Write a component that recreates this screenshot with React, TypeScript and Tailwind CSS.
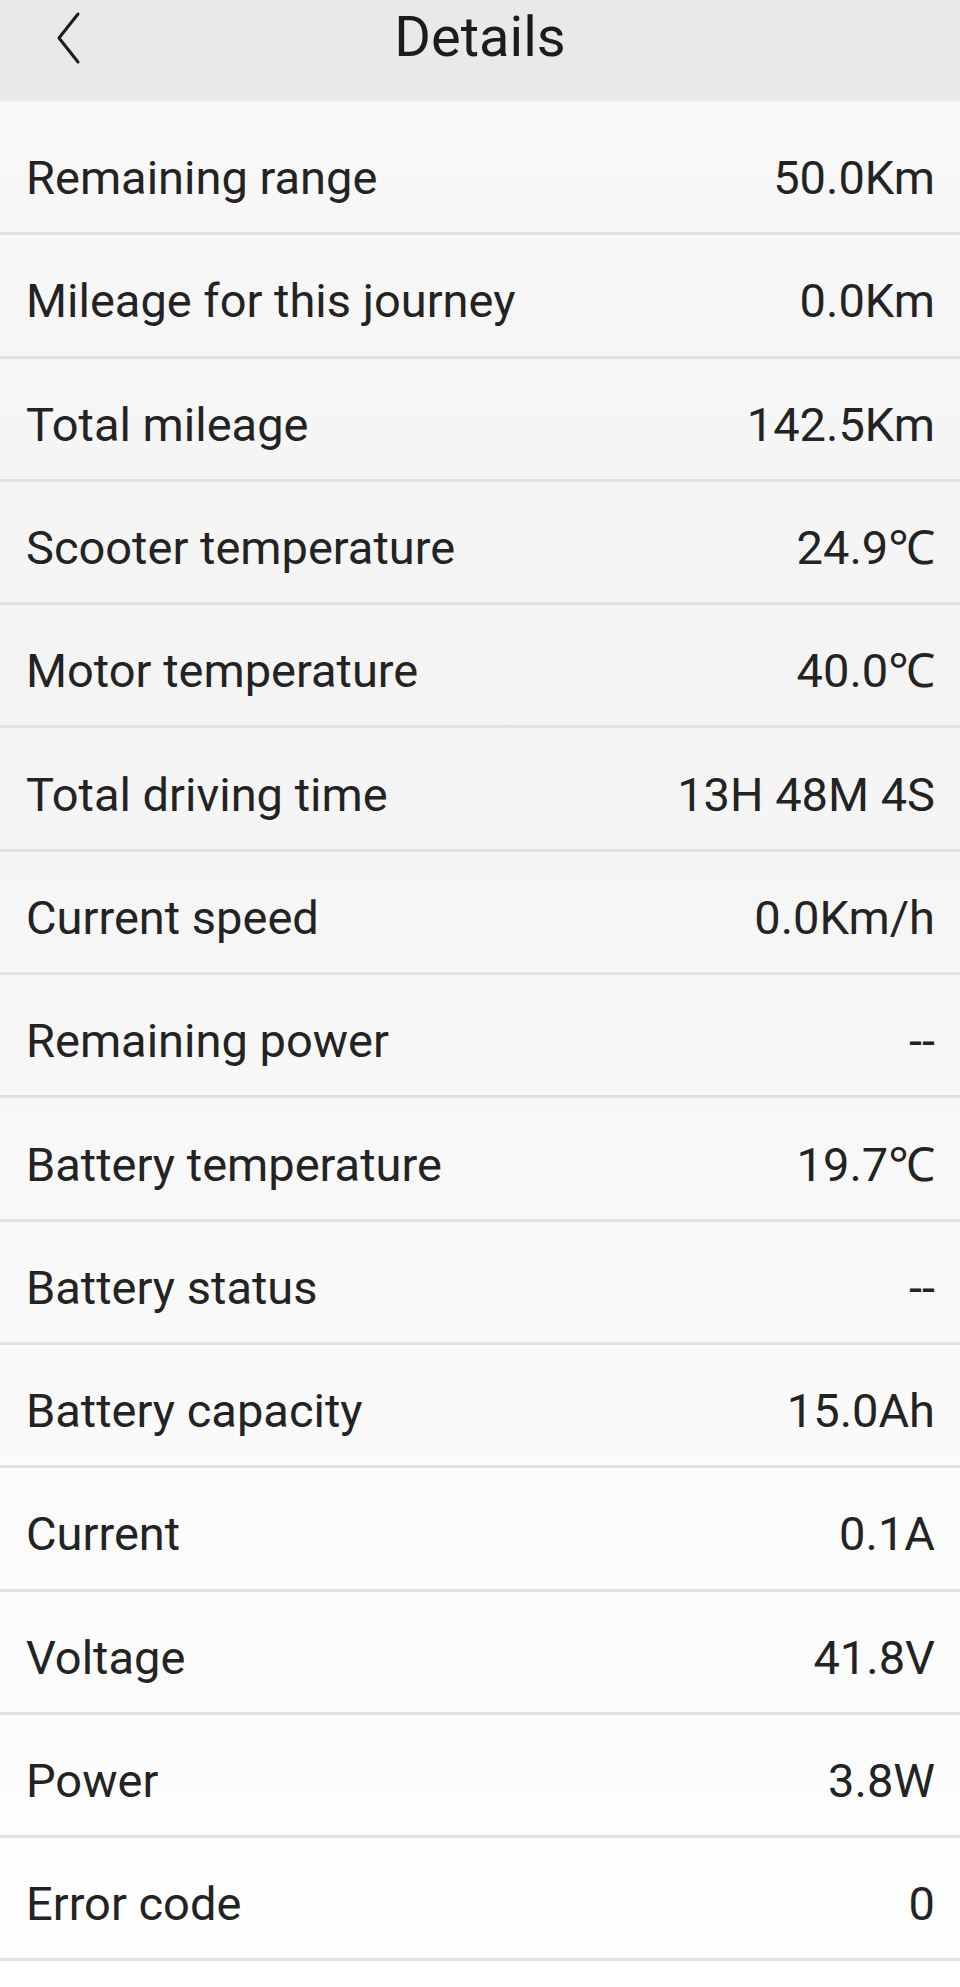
const rows: [string, string][] = [
  ["Remaining range", "50.0Km"],
  ["Mileage for this journey", "0.0Km"],
  ["Total mileage", "142.5Km"],
  ["Scooter temperature", "24.9℃"],
  ["Motor temperature", "40.0℃"],
  ["Total driving time", "13H 48M 4S"],
  ["Current speed", "0.0Km/h"],
  ["Remaining power", "--"],
  ["Battery temperature", "19.7℃"],
  ["Battery status", "--"],
  ["Battery capacity", "15.0Ah"],
  ["Current", "0.1A"],
  ["Voltage", "41.8V"],
  ["Power", "3.8W"],
  ["Error code", "0"],
];

function Header() {
  return (
    <div className="relative h-[102px] bg-[#e9e9e9] border-b-[3px] border-[#eeeeee] flex justify-center">
      <button className="absolute left-[48px] top-[10px] w-[40px] h-[56px] flex items-center justify-center">
        <svg width="30" height="54" viewBox="0 0 30 54" fill="none">
          <path d="M25 3 L6 27 L25 51" stroke="#1c1c1c" strokeWidth="3" strokeLinecap="round" strokeLinejoin="round" />
        </svg>
      </button>
      <h1 className="mt-[4px] text-[56px] leading-[66px] text-[#1c1c1c]">Details</h1>
    </div>
  );
}

function Row({ label, value }: { label: string; value: string }) {
  return (
    <div className="h-[123.3px] flex items-center justify-between pl-[26px] pr-[25px] pt-[11px] border-b-[3px] border-[#e2e2e2]">
      <span className="text-[47px] leading-none text-[#232323]">{label}</span>
      <span className="text-[47px] leading-none text-[#232323]">{value}</span>
    </div>
  );
}

export default function App() {
  return (
    <div
      className="w-[960px] min-h-[1987px] bg-white"
      style={{ fontFamily: "Roboto, 'Noto Sans', Arial, sans-serif" }}
    >
      <Header />
      <div className="pt-[10px] bg-gradient-to-b from-[#f8f8f8] via-[#f4f4f4] via-30% to-[#fefefe]">
        {rows.map(([l, v]) => (
          <Row key={l} label={l} value={v} />
        ))}
      </div>
    </div>
  );
}
